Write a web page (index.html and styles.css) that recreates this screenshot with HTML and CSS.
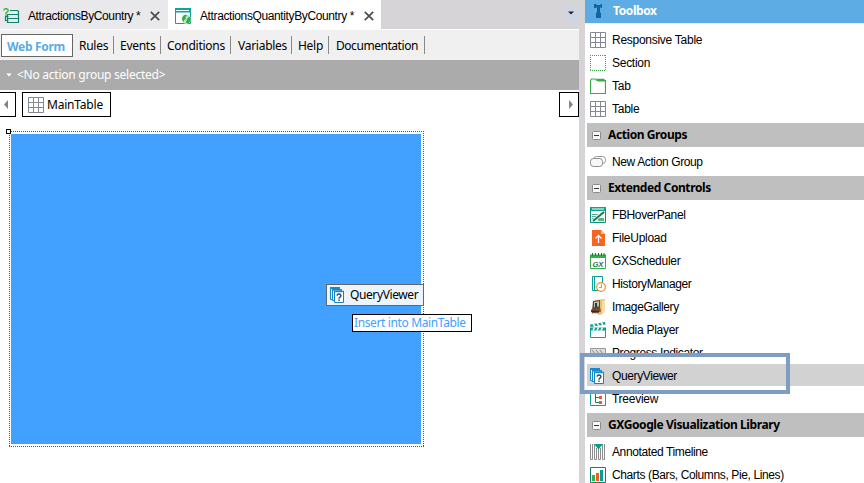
FILE: index.html
```html
<!DOCTYPE html>
<html lang="en">
<head>
<meta charset="utf-8">
<title>AttractionsQuantityByCountry</title>
<link rel="stylesheet" href="styles.css">
</head>
<body>
<svg class="defs" width="0" height="0">
  <symbol id="grid" viewBox="0 0 16 16"><path d="M.5 .5h15v15H.5zM5.500 0v16M10.500 0v16M0 5.500h16M0 10.500h16" fill="#fff" stroke="#838992"/></symbol>
  <symbol id="query" viewBox="0 0 16 16"><path d="M.5 .5h9v12h-9z" fill="#eef8ff" stroke="#1689c9"/><path d="M0 1h10" stroke="#1689c9" stroke-width="2"/><path d="M2.500 2.500h9v11h-9z" fill="#eef8ff" stroke="#1689c9"/><path d="M2 3h10" stroke="#1689c9" stroke-width="1.400"/><path d="M4.500 4.500h9v11h-9z" fill="#fff" stroke="#1b7dbb"/><path d="M4 4.500h10" stroke="#1689c9" stroke-width="1.400"/><path d="M7 8.600Q7.200 7 9 7t2 1.600q0 .9-1 1.500t-1 1.700" fill="none" stroke="#244c73" stroke-width="1.400"/><path d="M8.300 12.500h1.400v1.400H8.300z" fill="#244c73"/></symbol>
  <symbol id="minus" viewBox="0 0 9 9"><rect x=".5" y=".5" width="8" height="8" rx="1" fill="#f7f7f7" stroke="#8a8a8a"/><path d="M2 4.500h5" stroke="#333"/></symbol>
  <symbol id="close" viewBox="0 0 10 10"><path d="M.8 .8l8.400 8.400M9.200 .8L.8 9.200" stroke="#4b4b4f" stroke-width="1.700"/></symbol>
</svg>
<div class="app">
  <main class="editor">
    <div class="tabs">
      <div class="tab">
        <svg class="tab-icon" width="17" height="16" viewBox="0 0 17 16"><path d="M7 2.500h7.500l1 1v3h-11V6M4.500 6.500h11v4h-11zM4.500 10.500h11v4h-11zM2.500 8.500h3M2.500 12.500h3M2.500 8v5" fill="none" stroke="#12806f" stroke-width="1.200"/><path d="M.8 2.500Q1 .7 3 .7T5.200 2.500Q5.200 3.500 4 4T3 6" fill="none" stroke="#42b649" stroke-width="1.500"/><path d="M2.200 6.600h1.600v1.300H2.200z" fill="#42b649"/></svg>
        <span class="tab-name name-first">AttractionsByCountry *</span>
        <svg class="close" width="10" height="10"><use href="#close"/></svg>
      </div>
      <div class="tab active">
        <svg class="tab-icon" width="16" height="16" viewBox="0 0 16 16"><path d="M.5 .5h15v15H.5z" fill="#fff" stroke="#06a69b"/><path d="M0 0h16v4.500H0z" fill="#06a69b"/><path d="M1 2.500h13" stroke="#fff"/><circle cx="11.300" cy="11.200" r="4.700" fill="#c3e8ca"/><path d="M7 10q1-3 4-3.400l1 1.400-1.800 1 1 1.600-1.800 1.400-1 2Q7 12.500 7 10zM12 11l2-2.500 1.800 1.500q.4 4-3 5.500l-2-1z" fill="#35ad4b"/></svg>
        <span class="tab-name name-second">AttractionsQuantityByCountry *</span>
        <svg class="close" width="10" height="10"><use href="#close"/></svg>
      </div>
      <div class="tab-menu"><svg width="6" height="4" viewBox="0 0 6 4"><path d="M0 .5h6L3 3.500z" fill="#222"/></svg></div>
    </div>
    <nav class="sections">
      <span class="sec current">Web Form</span>
      <span class="sec rules">Rules</span>
      <span class="sec events">Events</span>
      <span class="sec conditions">Conditions</span>
      <span class="sec variables">Variables</span>
      <span class="sec help">Help</span>
      <span class="sec docs">Documentation</span>
    </nav>
    <div class="action-bar"><svg width="6" height="4" viewBox="0 0 6 4"><path d="M.2 .5h5.600L3 3.500z" fill="#fff"/></svg><span>&lt;No action group selected&gt;</span></div>
    <div class="path">
      <div class="arrow left"><svg width="4" height="9" viewBox="0 0 4 9"><path d="M4 0v9L0 4.500z" fill="#858585"/></svg></div>
      <div class="crumb"><svg width="16" height="16"><use href="#grid"/></svg><span>MainTable</span></div>
      <div class="arrow right"><svg width="4" height="9" viewBox="0 0 4 9"><path d="M0 0v9l4-4.500z" fill="#858585"/></svg></div>
    </div>
    <div class="canvas">
      <svg class="outline" width="415" height="316"><path d="M0 .5h415M0 315.500h415M.5 0v316M414.500 0v316" stroke="#555" stroke-dasharray="1 1"/></svg>
      <div class="table-fill"></div>
      <i class="handle"></i>
      <div class="dragged"><svg width="16" height="16"><use href="#query"/></svg><span>QueryViewer</span></div>
      <div class="hint">Insert into MainTable</div>
    </div>
  </main>
  <aside class="toolbox">
    <header class="title"><svg width="10" height="16" viewBox="0 0 10 16"><path d="M1 1h2l1 1h3l1-1h1v4H8L7 4v5l1 1v5H3v-5l1-1V4L3 5H1z" fill="#0c66a5"/></svg><span>Toolbox</span></header>
    <ul class="items">
      <li><svg width="16" height="16"><use href="#grid"/></svg><span>Responsive Table</span></li>
      <li><svg width="16" height="16" viewBox="0 0 16 16"><path d="M0 .5h16M0 15.500h16M.5 0v16M15.500 0v16" stroke="#35ae49" stroke-dasharray="1 1"/></svg><span>Section</span></li>
      <li><svg width="16" height="16" viewBox="0 0 16 16"><path d="M.5 2.500l1-1.500h4l1.500 1.500h8.500v13H.5z" fill="#fff" stroke="#35ae49" stroke-width="1.200"/><path d="M6.500 .8h7.500l1 1.200v1.500H8z" fill="#35ae49"/></svg><span>Tab</span></li>
      <li><svg width="16" height="16"><use href="#grid"/></svg><span>Table</span></li>
    </ul>
    <h2><svg width="9" height="9"><use href="#minus"/></svg><span>Action Groups</span></h2>
    <ul class="items">
      <li><svg width="16" height="16" viewBox="0 0 16 16"><rect x="3.500" y="2.500" width="12" height="7" rx="3" fill="#fff" stroke="#999"/><rect x=".5" y="4.500" width="12" height="8" rx="3" fill="#f8f8f8" stroke="#8c8c8c"/></svg><span class="tight">New Action Group</span></li>
    </ul>
    <h2><svg width="9" height="9"><use href="#minus"/></svg><span>Extended Controls</span></h2>
    <ul class="items">
      <li><svg width="16" height="16" viewBox="0 0 16 16"><path d="M.5 .5h15v15H.5z" fill="#fff" stroke="#078d7b"/><path d="M0 0h16v4H0z" fill="#0ca58d"/><path d="M2 2h12" stroke="#fff"/><path d="M2 7.500h6M2 9.500h4M2 11.500h3" stroke="#56a997"/><path d="M8 11h6v3H8z" fill="#56b86a"/><path d="M3.500 13.500L14 5" stroke="#fff" stroke-width="3.500"/><path d="M3 14L14 5" stroke="#16735f" stroke-width="2"/></svg><span class="tight">FBHoverPanel</span></li>
      <li><svg width="16" height="16" viewBox="0 0 16 16"><path d="M2 0h9l4 4v12H2z" fill="#f26522"/><path d="M11 0v4h4" fill="#ffb995"/><path d="M8.500 13V5.500M5.500 8.500l3-3 3 3" fill="none" stroke="#fff" stroke-width="1.300"/></svg><span>FileUpload</span></li>
      <li><svg width="16" height="16" viewBox="0 0 16 16"><path d="M.5 2.500h15v13H.5z" fill="#fff" stroke="#36ad4b"/><path d="M0 1.500h16v3.500H0z" fill="#36ad4b"/><path d="M2.500 0v3M5.500 0v3M8.500 0v3M11.500 0v3M14 0v3" stroke="#14803b"/><text x="2.400" y="13.500" class="gx" textLength="11" lengthAdjust="spacingAndGlyphs">GX</text></svg><span>GXScheduler</span></li>
      <li><svg width="16" height="16" viewBox="0 0 16 16"><path d="M2.500 .5h10v14h-10zM4.500 .5v14" fill="#fff" stroke="#0ba29a"/><circle cx="11" cy="11" r="4.300" fill="#fff" stroke="#ef8f22" stroke-width="1.200"/><path d="M11.500 8.300v3.200H9" fill="none" stroke="#ef8f22"/></svg><span class="tight">HistoryManager</span></li>
      <li><svg width="16" height="16" viewBox="0 0 16 16"><path d="M5 1l10-1v13l-5 3-7-2z" fill="#e8c173"/><path d="M12 2l3-1v12l-3 2z" fill="#f8dfa5"/><path d="M3 2l7-1v9l-8 2z" fill="#5b4937"/><path d="M4 3l5-.7v5l-5 1z" fill="#bfc2ad"/><path d="M5 4h2v4H5z" fill="#263f35"/><path d="M1 10.500l9-2 1 4-9 2z" fill="#7e4533"/><path d="M1 12l8 1" stroke="#302b28" stroke-width="1.600"/></svg><span class="tight">ImageGallery</span></li>
      <li><svg width="16" height="16" viewBox="0 0 16 16"><path d="M.5 6.500h15v9H.5z" fill="#fff" stroke="#0aa28e"/><path d="M0 2.500L15 0l.5 2.500L.5 5z" fill="#0aa28e"/><path d="M3 1.700l2 2.600M7 1l2 2.600M11 .4l2 2.600" stroke="#fff" stroke-width="1.500"/><path d="M0 5.500h16v3H0z" fill="#0aa28e"/><path d="M4.500 5.500L3 8.500M8.500 5.500L7 8.500M12.500 5.500L11 8.500" stroke="#fff" stroke-width="1.500"/></svg><span>Media Player</span></li>
      <li><svg width="16" height="16" viewBox="0 0 16 16"><path d="M.5 3.500h15v8H.5z" fill="#ddd" stroke="#999"/><path d="M2 5l3 4M6 5l3 4M10 5l3 4" stroke="#888"/></svg><span class="tight">Progress Indicator</span></li>
      <li class="selected"><svg width="16" height="16"><use href="#query"/></svg><span class="tight">QueryViewer</span></li>
      <li><svg width="16" height="16" viewBox="0 0 16 16"><path d="M.5 .5h15v14H.5z" fill="#fff" stroke="#0aa29a"/><path d="M5.500 3v8.500H9M5.500 6.500H9" fill="none" stroke="#16806f"/><path d="M9 5h3v3H9zM9 10h3v3H9z" fill="#f15a29"/></svg><span>Treeview</span></li>
    </ul>
    <h2><svg width="9" height="9"><use href="#minus"/></svg><span>GXGoogle Visualization Library</span></h2>
    <ul class="items">
      <li><svg width="16" height="16" viewBox="0 0 16 16"><path d="M.5 0v15.500h2V0M4.500 0v15.500h2V4M8.500 5v10.500h2V4M12.500 0v15.500h2V0" fill="none" stroke="#8b8b8b"/><path d="M4 0h9L8.500 5.500z" fill="#079e91"/></svg><span class="tight">Annotated Timeline</span></li>
      <li><svg width="16" height="16" viewBox="0 0 16 16"><path d="M.5 .5h15v15H.5z" fill="#fff" stroke="#147d70"/><path d="M2 8h3v6H2z" fill="#35ad4b"/><path d="M6 6h3v8H6z" fill="#f15a29"/><path d="M10 3h3v11h-3z" fill="#079e91"/></svg><span class="tight">Charts (Bars, Columns, Pie, Lines)</span></li>
    </ul>
    <div class="callout"></div>
  </aside>
</div>
</body>
</html>
```
FILE: styles.css
```css
* { box-sizing: border-box; }
body { margin: 0; width: 864px; height: 483px; overflow: hidden; background: #fff; color: #000; font: 12px/16px "Liberation Sans", sans-serif; }
svg { flex: none; display: block; }
.defs { position: absolute; }
span { white-space: nowrap; }
.app { display: flex; height: 483px; }
.editor { width: 579px; flex: none; display: flex; flex-direction: column; }

.tabs { display: flex; height: 30px; flex: none; background: #d6d4d7; border-bottom: 1px solid #fff; }
.tab { width: 168px; display: flex; align-items: center; padding: 2px 8px 0 3px; background: #e9e8ea; }
.tab.active { width: 213px; padding-left: 7px; padding-right: 7px; background: #fff; }
.tab-name { margin-left: 8px; flex: 1; font-size: 12px; letter-spacing: -.38px; }
.name-second { margin-left: 9px; }
.tab-menu { width: 16px; height: 16px; margin: 5px 0 0 auto; background: #cfd5e2; display: flex; align-items: center; justify-content: center; }

.sections { height: 30px; flex: none; display: flex; align-items: center; padding-left: 1px; background: #f0f0f0; font-family: "Noto Sans", sans-serif; font-size: 12px; }
.sec { height: 18px; line-height: 19px; border-right: 1px solid #888; padding-left: 6px; letter-spacing: -.27px; }
.sec.current { width: 72px; height: 23px; line-height: 23px; margin-top: 1px; border: 1px solid #666; background: #fff; color: #5aace4; font-weight: 700; padding-left: 5px; letter-spacing: -.3px; }
.rules { width: 41px; }
.events { width: 47px; }
.conditions { width: 70px; }
.variables { width: 61px; padding-left: 7px; }
.help { width: 37px; }
.docs { width: 96px; padding-left: 7px; letter-spacing: -.45px; }

.action-bar { height: 30px; flex: none; display: flex; align-items: center; gap: 5px; padding-left: 6px; background: #ababab; color: #fff; font-family: "Noto Sans", sans-serif; letter-spacing: -.25px; }
.path { display: flex; height: 27px; flex: none; padding-top: 2px; font-family: "Noto Sans", sans-serif; letter-spacing: -.2px; }
.arrow { height: 25px; border: 1px solid #000; display: flex; align-items: center; justify-content: center; }
.left { width: 16px; border-left: 0; padding-right: 3px; }
.right { width: 20px; margin-left: auto; padding-left: 3px; }
.crumb { width: 89px; margin-left: 6px; border: 1px solid #000; display: flex; align-items: center; gap: 3px; padding-left: 5px; }

.canvas { position: relative; flex: 1; }
.outline { position: absolute; left: 9px; top: 14px; }
.table-fill { position: absolute; left: 11px; top: 17px; width: 410px; height: 310px; background: #42a1ff; }
.handle { position: absolute; left: 6px; top: 12px; width: 5px; height: 5px; border: 1px solid #000; background: #fff; }
.dragged { position: absolute; left: 326px; top: 167px; width: 98px; height: 22px; display: flex; align-items: center; gap: 4px; padding-left: 3px; border: 1px solid #666; background: #ebf5ff; font-family: "Noto Sans", sans-serif; letter-spacing: -.4px; }
.hint { position: absolute; left: 352px; top: 197px; width: 120px; height: 18px; line-height: 16px; padding-left: 1px; border: 1px solid #000; background: #fff; color: #42a1ff; font-family: "Noto Sans", sans-serif; letter-spacing: -.37px; white-space: nowrap; }

.toolbox { position: relative; flex: 1; min-width: 0; border-left: 6px solid #d6d4d7; }
.title { height: 24px; display: flex; align-items: center; gap: 10px; padding: 0 0 2px 8px; background: #5dade4; border-bottom: 1px solid #e4f1fa; color: #fff; font: 700 12px/16px "Noto Sans", sans-serif; letter-spacing: -.4px; }
.items { margin: 0 0 0 2px; padding: 4px 0 3px; list-style: none; }
h2 + .items { padding-top: 3px; }
.items li { height: 23px; display: flex; align-items: center; gap: 6px; padding-left: 3px; letter-spacing: -.27px; }
.items li span { padding-top: 1px; }
.items .tight { letter-spacing: -.38px; }
.items .selected { background: linear-gradient(#d2d2d2 22px, #fff 22px); }
.gx { font: italic 700 8px "Liberation Sans", sans-serif; fill: #167348; letter-spacing: 0; }
h2 { height: 24px; margin: 0 0 0 2px; display: flex; align-items: center; gap: 7px; padding-left: 5px; background: #bfbfbf; font: 700 12px/16px "Noto Sans", sans-serif; letter-spacing: -.41px; }
.callout { position: absolute; left: -5px; top: 353px; width: 210px; height: 41px; border: 4px solid #7e9dc2; }
```
